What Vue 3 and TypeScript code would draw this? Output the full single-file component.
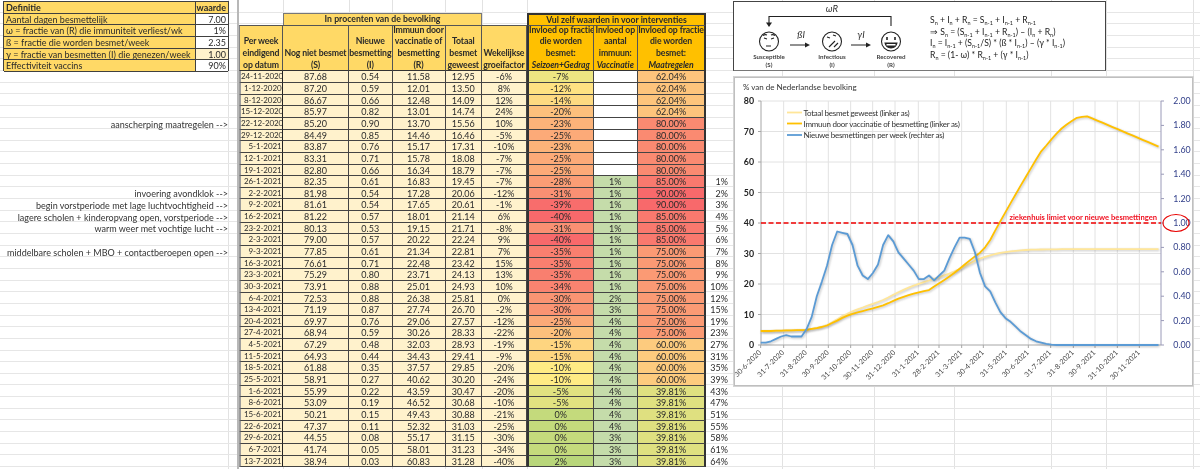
<script setup lang="ts">
// Spreadsheet: SIR model table + chart
type Row = [string, string, string, string, string, string, string, string, string, string]

const raw = `24-11-2020 87.68 0.54 11.58 12.95 -6% -7% - 62.04% -
1-12-2020 87.20 0.59 12.01 13.50 8% -12% - 62.04% -
8-12-2020 86.67 0.66 12.48 14.09 12% -14% - 62.04% -
15-12-2020 85.97 0.82 13.01 14.74 24% -20% - 62.04% -
22-12-2020 85.20 0.90 13.70 15.56 10% -23% - 80.00% -
29-12-2020 84.49 0.85 14.46 16.46 -5% -25% - 80.00% -
5-1-2021 83.87 0.76 15.17 17.31 -10% -23% - 80.00% -
12-1-2021 83.31 0.71 15.78 18.08 -7% -25% - 80.00% -
19-1-2021 82.80 0.66 16.34 18.79 -7% -25% - 80.00% -
26-1-2021 82.35 0.61 16.83 19.45 -7% -28% 1% 85.00% 1%
2-2-2021 81.98 0.54 17.28 20.06 -12% -31% 1% 90.00% 2%
9-2-2021 81.61 0.54 17.65 20.61 -1% -39% 1% 90.00% 3%
16-2-2021 81.22 0.57 18.01 21.14 6% -40% 1% 85.00% 4%
23-2-2021 80.13 0.53 19.15 21.71 -8% -31% 1% 85.00% 5%
2-3-2021 79.00 0.57 20.22 22.24 9% -40% 1% 85.00% 6%
9-3-2021 77.85 0.61 21.34 22.81 7% -35% 1% 75.00% 7%
16-3-2021 76.61 0.71 22.48 23.42 15% -35% 1% 75.00% 8%
23-3-2021 75.29 0.80 23.71 24.13 13% -35% 1% 75.00% 9%
30-3-2021 73.91 0.88 25.01 24.93 10% -34% 1% 75.00% 10%
6-4-2021 72.53 0.88 26.38 25.81 0% -30% 2% 75.00% 12%
13-4-2021 71.19 0.87 27.74 26.70 -2% -30% 3% 75.00% 15%
20-4-2021 69.97 0.76 29.06 27.57 -12% -25% 4% 75.00% 19%
27-4-2021 68.94 0.59 30.26 28.33 -22% -20% 4% 75.00% 23%
4-5-2021 67.29 0.48 32.03 28.93 -19% -15% 4% 60.00% 27%
11-5-2021 64.93 0.44 34.43 29.41 -9% -15% 4% 60.00% 31%
18-5-2021 61.88 0.35 37.57 29.85 -20% -10% 4% 60.00% 35%
25-5-2021 58.91 0.27 40.62 30.20 -24% -10% 4% 60.00% 39%
1-6-2021 55.99 0.22 43.59 30.47 -20% -5% 4% 39.81% 43%
8-6-2021 53.09 0.19 46.52 30.68 -10% -5% 4% 39.81% 47%
15-6-2021 50.21 0.15 49.43 30.88 -21% 0% 4% 39.81% 51%
22-6-2021 47.37 0.11 52.32 31.03 -25% 0% 4% 39.81% 55%
29-6-2021 44.55 0.08 55.17 31.15 -30% 0% 3% 39.81% 58%
6-7-2021 41.74 0.05 58.01 31.23 -34% 0% 3% 39.81% 61%
13-7-2021 38.94 0.03 60.83 31.28 -40% 2% 3% 39.81% 64%`

const rows = raw.split('\n').map((l) => l.split(' ').map((c) => (c === '-' ? '' : c)) as Row)

const definitions = [
  { label: 'Aantal dagen besmettelijk', value: '7.00' },
  { label: 'ω = fractie van (R) die immuniteit verliest/wk', value: '1%' },
  { label: 'ß = fractie die worden besmet/week', value: '2.35' },
  { label: 'γ = fractie van besmetten (I) die genezen/week', value: '1.00', tint: true },
  { label: 'Effectiviteit vaccins', value: '90%' },
]

const notes: Record<number, string> = {
  4: 'aanscherping maatregelen -->',
  10: 'invoering avondklok -->',
  11: 'begin vorstperiode met lage luchtvochtigheid -->',
  12: 'lagere scholen + kinderopvang open, vorstperiode -->',
  13: 'warm weer met vochtige lucht -->',
  15: 'middelbare scholen + MBO + contactberoepen open -->',
}

type Rgb = [number, number, number]
function scale(v: number, stops: [number, Rgb][]) {
  for (let i = 0; i < stops.length - 1; i++) {
    const [a, ca] = stops[i]
    const [b, cb] = stops[i + 1]
    if (v <= b) {
      const t = (v - a) / (b - a)
      return `rgb(${ca.map((c, n) => Math.round(c + (cb[n] - c) * t)).join(',')})`
    }
  }
  return `rgb(${stops[stops.length - 1][1].join(',')})`
}
const seizoenColor = (s: string) =>
  scale(parseFloat(s), [[-40, [248, 105, 107]], [-10, [255, 235, 132]], [2, [184, 214, 122]]])
const maatColor = (s: string) =>
  scale(-parseFloat(s), [[-90, [248, 105, 107]], [-50, [255, 235, 132]], [-39.81, [223, 224, 128]]])

// chart: svg uses page coordinates through its viewBox
const x0 = 760.7
const pxPerWeek = 5.1
const yLeft = (v: number) => 345 - v * 3.05
const yRight = (v: number) => 345 - v * 122

const iBefore = [0.02, 0.02, 0.03, 0.05, 0.07, 0.08, 0.07, 0.07, 0.07, 0.13, 0.23, 0.4, 0.52, 0.65, 0.82, 0.93, 0.92, 0.91, 0.82, 0.65, 0.57]
const rBefore = [4.6, 4.6, 4.6, 4.7, 4.7, 4.8, 4.8, 4.9, 4.9, 5, 5.3, 5.5, 5.9, 6.4, 7.2, 8, 8.9, 9.6, 10.2, 10.7, 11.1]
const tBefore = [4.5, 4.5, 4.5, 4.6, 4.6, 4.7, 4.7, 4.8, 4.9, 5, 5.3, 5.6, 6, 6.5, 7.4, 8.4, 9.5, 10.2, 11, 11.7, 12.3]
const rAfter = [63.5, 65.4, 67.4, 69.3, 71, 72.3, 73.4, 74.5, 74.8, 75]
for (let k = 65; k <= 78; k++) rAfter.push(75 - (k - 64) * 0.71)

const seriesR = [...rBefore, ...rows.map((r) => +r[3]), ...rAfter]
const seriesT = [...tBefore, ...rows.map((r) => +r[4]), ...Array.from({ length: 24 }, (_, i) => 31.3 + Math.min(i, 4) * 0.03)]
const seriesI = [...iBefore, ...rows.map((r) => +r[2]), 0.02, 0.01, 0.003, ...Array(21).fill(0)]

const toPath = (vals: number[], y: (v: number) => number) =>
  vals.map((v, k) => `${(x0 + k * pxPerWeek).toFixed(1)},${y(v).toFixed(1)}`).join(' ')

const pathR = toPath(seriesR, yLeft)
const pathT = toPath(seriesT, yLeft)
const pathI = toPath(seriesI, yRight)

const xLabels = [
  '30-6-2020', '31-7-2020', '31-8-2020', '30-9-2020', '31-10-2020', '30-11-2020', '31-12-2020', '31-1-2021', '28-2-2021',
  '31-3-2021', '30-4-2021', '31-5-2021', '30-6-2021', '31-7-2021', '31-8-2021', '30-9-2021', '31-10-2021', '30-11-2021',
]
const tickX = [92, 161, 229, 295, 362, 428, 495, 565, 627, 695, 760, 829, 895, 962, 1030, 1095, 1162, 1228].map((z) => 730 + z / 3)
const leftTicks = [0, 10, 20, 30, 40, 50, 60, 70, 80]
const rightTicks = [0, 0.2, 0.4, 0.6, 0.8, 1, 1.2, 1.4, 1.6, 1.8, 2]
</script>

<template>
  <div class="sheet">
    <aside class="left">
      <div class="defs">
        <div class="def-label head">Definitie</div>
        <div class="def-value head">waarde</div>
        <template v-for="d in definitions" :key="d.label">
          <div class="def-label">{{ d.label }}</div>
          <div class="def-value" :class="{ tint: d.tint }">{{ d.value }}</div>
        </template>
      </div>
      <div class="notes">
        <div v-for="(_, i) in rows" :key="i" class="note">{{ notes[i] }}</div>
      </div>
    </aside>

    <div class="table">
      <div class="table-head">
        <div class="group light">In procenten van de bevolking</div>
        <div class="group dark">Vul zelf waarden in voor interventies</div>

        <div class="h light c1">Per week<br />eindigend<br />op datum</div>
        <div class="h light c2">Nog niet besmet<br />(S)</div>
        <div class="h light c3">Nieuwe<br />besmetting<br />(I)</div>
        <div class="h light c4">Immuun door<br />vaccinatie of<br />besmetting<br />(R)</div>
        <div class="h light c5">Totaal<br />besmet<br />geweest</div>
        <div class="h light c6">Wekelijkse<br />groeifactor</div>
        <div class="h dark c7">Invloed op fractie<br />die worden<br />besmet:<br /><i>Seizoen+Gedrag</i></div>
        <div class="h dark c8">Invloed op<br />aantal<br />immuun:<br /><i>Vaccinatie</i></div>
        <div class="h dark c9 end">Invloed op fractie<br />die worden<br />besmet:<br /><i>Maatregelen</i></div>
      </div>

      <div class="table-body">
        <template v-for="r in rows" :key="r[0]">
          <div class="cell date">{{ r[0] }}</div>
          <div class="cell">{{ r[1] }}</div>
          <div class="cell">{{ r[2] }}</div>
          <div class="cell">{{ r[3] }}</div>
          <div class="cell">{{ r[4] }}</div>
          <div class="cell">{{ r[5] }}</div>
          <div class="cell edge" :style="{ background: seizoenColor(r[6]) }">{{ r[6] }}</div>
          <div class="cell" :class="r[7] ? 'vacc' : 'blank'">{{ r[7] }}</div>
          <div class="cell edge-r" :style="{ background: maatColor(r[8]) }">{{ r[8] }}</div>
          <div class="extra">{{ r[9] }}</div>
        </template>
      </div>
    </div>

    <div class="right">
      <div class="model">
        <svg class="model-svg" viewBox="756 1 170 70" width="170" height="70">
          <text x="832" y="12" class="var" text-anchor="middle">ωR</text>
          <path d="M891 26V16.5H769V23" fill="none" stroke="#222" stroke-width="1.1" />
          <path d="M766 22.5h6l-3 4.5z" fill="#222" />

          <g fill="none" stroke="#222" stroke-width="1.1">
            <circle cx="769" cy="41.5" r="9.5" />
            <circle cx="832" cy="41.5" r="9.5" />
            <circle cx="891" cy="41.5" r="9.5" />
            <!-- susceptible -->
            <path d="M764 38l3 1M774 38l-3 1M766 46h5" />
            <path d="M763 35.5q2-1.5 4-.5M771 35q2-1 4 .5" />
            <!-- infectious -->
            <path d="M827 37l3 1M833 35l3 1M829 47q3-3 6-6M834 47l4-4" />
            <!-- recovered -->
            <path d="M887 37v3M895 37v3" stroke-width="1.6" />
            <path d="M885 43h12q-1 5-6 5t-6-5z" fill="#222" />
          </g>
          <path d="M886.5 44h9v1.5h-9z" fill="#fff" />

          <path d="M790 45h17M851 45h17" stroke="#222" stroke-width="1" />
          <path d="M805 42.5l5 2.5-5 2.5zM866 42.5l5 2.5-5 2.5z" fill="#222" />
          <text x="801" y="38" class="var" text-anchor="middle">ßI</text>
          <text x="861" y="38" class="var" text-anchor="middle">γI</text>

          <text x="769" y="59" class="tiny" text-anchor="middle">Susceptible</text>
          <text x="769" y="66.5" class="tiny" text-anchor="middle">(S)</text>
          <text x="832" y="59" class="tiny" text-anchor="middle">Infectious</text>
          <text x="832" y="66.5" class="tiny" text-anchor="middle">(I)</text>
          <text x="891" y="59" class="tiny" text-anchor="middle">Recovered</text>
          <text x="891" y="66.5" class="tiny" text-anchor="middle">(R)</text>
        </svg>
        <div class="eqs">
          <div>S<sub>n</sub> + I<sub>n</sub> + R<sub>n</sub> = S<sub>n-1</sub> + I<sub>n-1</sub> + R<sub>n-1</sub></div>
          <div>⇒ S<sub>n</sub> = (S<sub>n-1</sub> + I<sub>n-1</sub> + R<sub>n-1</sub>) – (I<sub>n</sub> + R<sub>n</sub>)</div>
          <div>I<sub>n</sub> = I<sub>n-1</sub> + (S<sub>n-1</sub>/S) * (ß * I<sub>n-1</sub>) – (γ * I<sub>n-1</sub>)</div>
          <div>R<sub>n</sub> = (1- ω) * R<sub>n-1</sub> + (γ * I<sub>n-1</sub>)</div>
        </div>
      </div>

      <div class="chart">
        <svg viewBox="735 78 457 307" width="457" height="307">
          <text x="743" y="90" class="title">% van de Nederlandse bevolking</text>

          <g stroke="#e2e2e2" stroke-width="1">
            <line v-for="t in leftTicks.slice(1)" :key="t" x1="761" x2="1161" :y1="yLeft(t)" :y2="yLeft(t)" />
            <line v-for="x in tickX.slice(1)" :key="x" :x1="x" :x2="x" y1="101" y2="345" />
          </g>
          <path d="M761 101V345H1161" fill="none" stroke="#a6a6a6" stroke-width="1" />
          <path d="M1161 101V345" stroke="#9a9ab8" stroke-width="1" />
          <line v-for="x in tickX" :key="'t' + x" :x1="x" :x2="x" y1="345" y2="348" stroke="#a6a6a6" />
          <line v-for="t in rightTicks" :key="'r' + t" x1="1161" x2="1164" :y1="yRight(t)" :y2="yRight(t)" stroke="#9a9ab8" />
          <line v-for="t in leftTicks" :key="'l' + t" x1="758" x2="761" :y1="yLeft(t)" :y2="yLeft(t)" stroke="#a6a6a6" />

          <text v-for="t in leftTicks" :key="'lt' + t" x="754" :y="yLeft(t) + 3" class="ax-left" text-anchor="end">{{ t }}</text>
          <text v-for="t in rightTicks" :key="'rt' + t" x="1182" :y="yRight(t) + 3" class="ax-right" text-anchor="middle">{{ t.toFixed(2) }}</text>
          <text
            v-for="(l, i) in xLabels"
            :key="l"
            class="ax-x"
            text-anchor="end"
            :transform="`translate(${tickX[i] + 1} 353) rotate(-45)`"
          >{{ l }}</text>

          <polyline :points="pathT" class="line shadow" stroke="#ffe699" stroke-width="1.8" />
          <polyline :points="pathR" class="line shadow" stroke="#ffc000" stroke-width="1.8" />
          <polyline :points="pathI" class="line shadow" stroke="#5b9bd5" stroke-width="1.8" />

          <line x1="761" x2="1161" y1="223" y2="223" stroke="#f00000" stroke-width="1.5" stroke-dasharray="5 2.5" />
          <text x="1157" y="220" class="limit" text-anchor="end">ziekenhuis limiet voor nieuwe besmettingen</text>
          <ellipse cx="1176" cy="223" rx="13" ry="8.5" fill="none" stroke="#e80000" stroke-width="1.1" />

          <line x1="787" x2="802" y1="112.5" y2="112.5" stroke="#ffe699" stroke-width="1.8" />
          <line x1="787" x2="802" y1="123.5" y2="123.5" stroke="#ffc000" stroke-width="1.8" />
          <line x1="787" x2="802" y1="135" y2="135" stroke="#5b9bd5" stroke-width="1.8" />
          <text x="803.5" y="115.5" class="legend">Totaal besmet geweest (linker as)</text>
          <text x="803.5" y="126.5" class="legend">Immuun door vaccinatie of besmetting (linker as)</text>
          <text x="803.5" y="138" class="legend">Nieuwe besmettingen per week (rechter as)</text>
        </svg>
      </div>
    </div>
  </div>
</template>

<style>
html,
body {
  margin: 0;
  background: #fff;
}
</style>

<style scoped>
.sheet {
  --row: 11.65px;
  --grid: linear-gradient(to right, #e2e2e2 1px, transparent 1px);
  --cols: 44px 66px 43.5px 53px 36.5px 45px 66.5px 44.5px 68px 24px;
  display: flex;
  width: 1200px;
  height: 469px;
  overflow: hidden;
  font-family: Lato, "Liberation Sans", sans-serif;
  font-size: 9px;
  color: #2a2a2a;
  background-color: #fff;
  background-image:
    repeating-linear-gradient(to bottom, transparent 0 10.65px, #e6e6e6 10.65px 11.65px),
    var(--grid), var(--grid), var(--grid), var(--grid), var(--grid), var(--grid), var(--grid),
    var(--grid), var(--grid), var(--grid), var(--grid), var(--grid), var(--grid);
  background-repeat: repeat, no-repeat, no-repeat, no-repeat, no-repeat, no-repeat, no-repeat, no-repeat,
    no-repeat, no-repeat, no-repeat, no-repeat, no-repeat, no-repeat;
  background-position: 0 1px, 228px 0, 782px 0, 874px 0, 954px 0, 1051px 0, 1106px 0, 1193px 0,
    283px 0, 349px 0, 392px 0, 445px 0, 482px 0, 527px 0;
  filter: blur(0.3px);
}

.left {
  flex: 0 0 239px;
  min-width: 0;
  box-sizing: border-box;
  padding: 1px 8px 0 3px;
  border-right: 2px solid #b8b8b8;
}

.defs {
  display: grid;
  grid-template-columns: 192px 32px;
  grid-auto-rows: 11.65px;
  border: 1px solid #404040;
  height: 70px;
  box-sizing: border-box;
}

.def-label,
.def-value {
  line-height: 11px;
  border-bottom: 1px solid #404040;
  white-space: nowrap;
  overflow: hidden;
  font-size: 9px;
}

.def-label {
  background: #ffd966;
  padding-left: 2px;
  border-right: 1px solid #404040;
}

.def-value {
  background: #fff;
  text-align: right;
  padding-right: 2px;
}

.def-value.tint {
  background: #fff2cc;
}

.head {
  background: #ffd966;
  font-weight: 700;
}

.notes {
  margin-top: 1px;
}

.note {
  height: var(--row);
  line-height: 11.5px;
  text-align: right;
  white-space: nowrap;
  font-size: 9px;
  padding-right: 1px;
  color: #333;
}

.table {
  flex: 0 0 491px;
  min-width: 0;
  text-align: center;
  line-height: 11px;
}

.table-head {
  display: grid;
  grid-template-columns: var(--cols);
  grid-template-rows: 13px 12px repeat(4, 11.6px);
}

.table-body {
  display: grid;
  grid-template-columns: var(--cols);
  grid-auto-rows: var(--row);
}

.light {
  background: #ffd966;
}

.dark {
  background: #ffc000;
}

.group {
  font-weight: 700;
  font-size: 8.7px;
  grid-row: 2;
  border: 1px solid #404040;
  border-bottom: 0;
  line-height: 10.5px;
}

.group.light {
  grid-column: 2 / 6;
  border-color: #777;
}

.group.dark {
  grid-column: 7 / 10;
  border: 2px solid #333;
  border-bottom: 0;
}

.h {
  grid-row: 3 / 7;
  align-self: stretch;
  display: flex;
  flex-direction: column;
  justify-content: flex-end;
  font-weight: 700;
  font-size: 8.7px;
  letter-spacing: -0.12px;
  line-height: 11.65px;
  border-right: 1px solid #555;
  border-top: 1px solid #555;
  border-bottom: 1px solid #333;
  white-space: nowrap;
  overflow: hidden;
}

.h.c1 {
  grid-column: 1;
  border-left: 1px solid #888;
}
.h.c2 { grid-column: 2; }
.h.c3 { grid-column: 3; }
.h.c4 { grid-column: 4; }
.h.c5 { grid-column: 5; }
.h.c6 { grid-column: 6; }
.h.c7 {
  grid-column: 7;
  border-left: 2px solid #333;
}
.h.c8 { grid-column: 8; }
.h.c9 { grid-column: 9; }
.h.end {
  border-right: 2px solid #333;
}

.cell {
  background: #fff2cc;
  line-height: 11.4px;
  border-right: 1px solid #444;
  border-bottom: 1px solid #444;
  white-space: nowrap;
  overflow: hidden;
}

.date {
  text-align: right;
  padding-right: 0.5px;
  font-size: 8px;
  letter-spacing: -0.1px;
  border-left: 2px solid #9c9c9c;
  border-right-color: #222;
}

.edge {
  border-left: 2px solid #333;
}

.edge-r {
  border-right: 2px solid #333;
}

.vacc {
  background: #c5dcaa;
}

.blank {
  background: #fff;
}

.extra {
  text-align: right;
  line-height: 11.4px;
  padding-right: 2px;
}

.right {
  flex: 1;
  min-width: 0;
  display: flex;
  flex-direction: column;
  padding-left: 3px;
}

.model {
  display: flex;
  width: 373px;
  height: 70px;
  margin-top: 1px;
  box-sizing: border-box;
  background: #fff;
  border: 1px solid #444;
  border-bottom: 1px solid #777;
}

.model-svg {
  flex: none;
  margin-left: 22px;
  margin-top: -1px;
  overflow: visible;
}

.var {
  font-style: italic;
  font-size: 9.5px;
  fill: #333;
}

.tiny {
  font-size: 6.2px;
  font-weight: 700;
  fill: #444;
}

.eqs {
  margin: 13px 0 0 4px;
  font-size: 8.6px;
  line-height: 11.7px;
  white-space: nowrap;
  color: #222;
}

.eqs sub {
  font-size: 5.5px;
  line-height: 0;
  vertical-align: -1.5px;
}

.chart {
  width: 459px;
  height: 309px;
  margin-top: 6px;
  margin-left: 1px;
  box-sizing: border-box;
  background: #fff;
  border: 1px solid #bfbfbf;
  box-shadow: 0 0 0 1px #d4d4d4;
}

.chart svg {
  display: block;
}

.title {
  font-size: 8px;
  fill: #333;
}

.ax-left {
  font-size: 8.8px;
  font-weight: 700;
  fill: #222;
}

.ax-right {
  font-size: 8.8px;
  fill: #33408a;
}

.ax-x {
  font-size: 7.2px;
  fill: #444;
}

.legend {
  font-size: 8px;
  letter-spacing: -0.27px;
  fill: #333;
}

.limit {
  font-size: 7.6px;
  font-weight: 700;
  fill: #f01020;
}

.line {
  fill: none;
  stroke-linejoin: round;
}

.shadow {
  filter: drop-shadow(1.5px 1.5px 1px rgba(80, 80, 80, 0.35));
}
</style>
